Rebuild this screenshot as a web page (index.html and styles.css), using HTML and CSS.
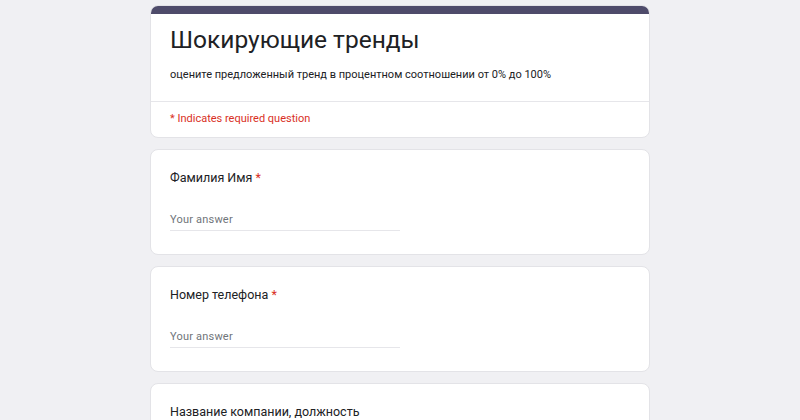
FILE: index.html
```html
<!DOCTYPE html>
<html lang="ru">
<head>
<meta charset="utf-8">
<link rel="stylesheet" href="styles.css">
</head>
<body>
<main class="form">
  <section class="card header-card">
    <div class="band"></div>
    <div class="header-main">
      <h1 class="title">Шокирующие тренды</h1>
      <p class="desc">оцените предложенный тренд в процентном соотношении от 0% до 100%</p>
    </div>
    <div class="header-note">* Indicates required question</div>
  </section>
  <section class="card question">
    <div class="q-label">Фамилия Имя <span class="req">*</span></div>
    <div class="answer">Your answer</div>
  </section>
  <section class="card question">
    <div class="q-label">Номер телефона <span class="req">*</span></div>
    <div class="answer">Your answer</div>
  </section>
  <section class="card question">
    <div class="q-label">Название компании, должность</div>
  </section>
</main>
</body>
</html>
```

FILE: styles.css
```css
html, body {
  margin: 0;
  padding: 0;
  background: #f0f0f3;
  font-family: Roboto, "Noto Sans", sans-serif;
  color: #202124;
}
body {
  height: 420px;
  overflow: hidden;
}
.form {
  width: 500px;
  margin: 0 auto;
  padding-top: 5px;
  display: flex;
  flex-direction: column;
  gap: 11px;
}
.card {
  background: #fff;
  border: 1px solid #e3e3e7;
  border-radius: 8px;
  box-sizing: border-box;
  overflow: hidden;
}
.band {
  height: 8px;
  background: #4e4b6a;
}
.header-main {
  padding: 9px 19px 18px;
  border-bottom: 1px solid #e6e6ea;
}
.title {
  margin: 0;
  font-size: 24.5px;
  font-weight: 400;
  line-height: 34px;
  color: #202124;
}
.desc {
  margin: 10px 0 0;
  font-size: 11px;
  line-height: 16px;
}
.header-note {
  padding: 9px 19px 10px;
  font-size: 11px;
  line-height: 16px;
  color: #d93025;
}
.question {
  height: 106px;
  padding: 19px 19px 0;
}
.q-label {
  font-size: 12.5px;
  line-height: 18px;
}
.req {
  color: #d93025;
}
.answer {
  margin-top: 25px;
  width: 230px;
  font-size: 11px;
  line-height: 16px;
  color: #70757a;
  padding-bottom: 2px;
  border-bottom: 1px solid #e6e6ea;
  letter-spacing: 0.2px;
}
```
